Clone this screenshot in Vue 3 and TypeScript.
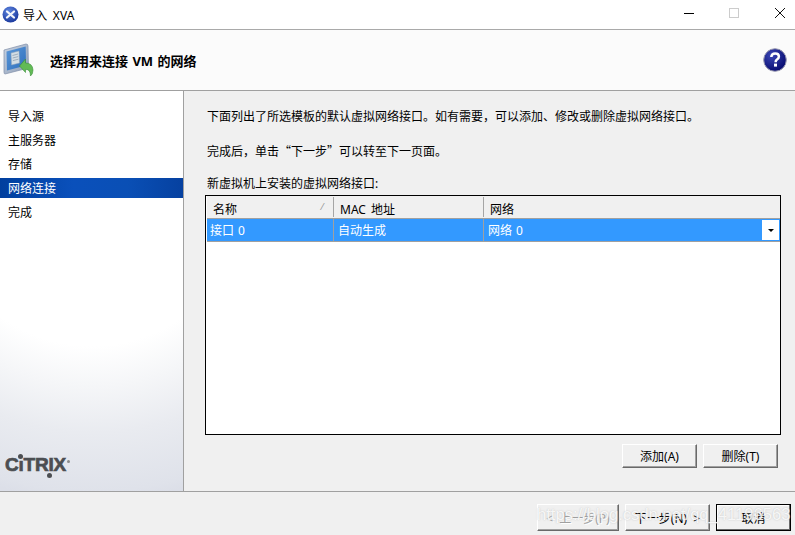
<script setup lang="ts">
interface Step { label: string; active?: boolean }
const steps: Step[] = [
  { label: '导入源' },
  { label: '主服务器' },
  { label: '存储' },
  { label: '网络连接', active: true },
  { label: '完成' },
]
</script>

<template>
  <div class="win">
    <div class="titlebar">
      <svg class="appicon" width="17" height="17" viewBox="0 0 17 17">
        <defs>
          <radialGradient id="ab" cx="40%" cy="30%" r="75%">
            <stop offset="0" stop-color="#5f86e0" />
            <stop offset="1" stop-color="#17359a" />
          </radialGradient>
        </defs>
        <circle cx="8.5" cy="8.5" r="8" fill="url(#ab)" />
        <path d="M5 5.5 L12 11.5 M12 5.5 L5 11.5" stroke="#f2f5fb" stroke-width="2.3" stroke-linecap="round" />
      </svg>
      <span class="title">导入 XVA</span>
      <div class="controls">
        <svg width="145" height="29" viewBox="0 0 145 29">
          <path d="M34 13.5 H44" stroke="#000" fill="none" />
          <rect x="79.5" y="8.5" width="9" height="9" fill="none" stroke="#ccc" />
          <path d="M125 8 L135 18 M135 8 L125 18" stroke="#111" fill="none" />
        </svg>
      </div>
    </div>

    <div class="header">
      <svg class="wizicon" width="34" height="36" viewBox="0 0 34 36">
        <defs>
          <linearGradient id="mon" x1="0" y1="0" x2="1" y2="1">
            <stop offset="0" stop-color="#c9d4e3" />
            <stop offset="1" stop-color="#8c9cb5" />
          </linearGradient>
          <linearGradient id="scr" x1="0" y1="0" x2="1" y2="1">
            <stop offset="0" stop-color="#5a97d8" />
            <stop offset="1" stop-color="#2f6fbd" />
          </linearGradient>
        </defs>
        <path d="M1 7 L23 1 Q25 1 25 3 L25.5 25 L2 31 Q1 31 1 29 Z" fill="url(#mon)" stroke="#7f8ea8" stroke-width=".7" />
        <path d="M3.5 8.5 L22.7 3.6 L23 22.5 L4 27.5 Z" fill="url(#scr)" />
        <path d="M8 10 L16 8 L16.5 20 L8.5 22 Z" fill="#d3dde4" stroke="#8da3b8" stroke-width=".5" />
        <path d="M9.5 12.5 L15 11 M9.7 15 L15.2 13.6 M9.9 17.6 L15.4 16.2" stroke="#8598aa" stroke-width=".7" />
        <path d="M16.5 23 L22.5 16 L22.5 20 Q29.5 20 30 27 Q30 31 27.5 33 Q27.5 26 22.5 26.5 L22.5 29.5 Z" fill="#62bb55" stroke="#3b8f3a" stroke-width=".6" />
      </svg>
      <span class="heading">选择用来连接 VM 的网络</span>
      <svg class="help" width="24" height="24" viewBox="0 0 24 24">
        <defs>
          <radialGradient id="hb" cx="35%" cy="30%" r="75%">
            <stop offset="0" stop-color="#3b47b5" />
            <stop offset="1" stop-color="#06096e" />
          </radialGradient>
        </defs>
        <circle cx="12" cy="12" r="11.3" fill="url(#hb)" stroke="#9a9ab0" stroke-width="1" />
        <path d="M8.3 9 Q8.5 5.5 12.2 5.5 Q15.9 5.5 15.9 8.6 Q15.9 10.4 14 11.5 Q12.6 12.4 12.6 14.2" fill="none" stroke="#fff" stroke-width="2.5" />
        <rect x="11" y="15.6" width="3" height="3" fill="#fff" />
      </svg>
    </div>

    <div class="main">
      <aside class="sidebar">
        <ul class="steps">
          <li v-for="s in steps" :key="s.label" class="step" :class="{ active: s.active }">{{ s.label }}</li>
        </ul>
        <div class="logo">
          <span class="logotext">CıTRIX</span>
          <i class="dot dot1"></i>
          <i class="dot dot2"></i>
          <i class="reg"></i>
        </div>
      </aside>

      <section class="content">
        <p class="para first">下面列出了所选模板的默认虚拟网络接口。如有需要，可以添加、修改或删除虚拟网络接口。</p>
        <p class="para second">完成后，单击“下一步”可以转至下一页面。</p>
        <p class="para third">新虚拟机上安装的虚拟网络接口:</p>

        <div class="table">
          <div class="thead">
            <div class="th c1">名称<span class="sort">⁄</span></div>
            <div class="th c2">MAC 地址</div>
            <div class="th c3">网络</div>
          </div>
          <div class="row">
            <div class="td c1">接口 0</div>
            <div class="td c2">自动生成</div>
            <div class="td c3">网络 0
              <span class="combo"><i class="arrow"></i></span>
            </div>
          </div>
        </div>

        <div class="actions">
          <button class="btn small" type="button">添加(A)</button>
          <button class="btn small" type="button">删除(T)</button>
        </div>
      </section>
    </div>

    <div class="footer">
      <button class="btn big back disabled" type="button">&lt; 上一步(P)</button>
      <button class="btn big next" type="button">下一步(N) &gt;</button>
      <button class="btn big default" type="button">取消</button>
      <span class="watermark">https://blog.csdn.net/qq_41196563</span>
    </div>
  </div>
</template>

<style>
html, body { margin: 0; padding: 0; background: #f0f0f0; }
</style>

<style scoped>
.win {
  width: 795px;
  height: 535px;
  overflow: hidden;
  display: flex;
  flex-direction: column;
  background: #f0f0f0;
  color: #000;
  font-family: "Noto Sans", "Noto Sans CJK SC", sans-serif;
  font-size: 12px;
  word-spacing: 1px;
}
.titlebar {
  height: 29px;
  flex: none;
  background: #fff;
  display: flex;
  align-items: center;
  position: relative;
}
.appicon { margin-left: 2px; }
.title { margin-left: 4px; font-size: 12px; word-spacing: 2px; letter-spacing: .2px; }
.controls { position: absolute; right: 0; top: 0; height: 29px; }
.controls svg { display: block; }
.header {
  height: 60px;
  flex: none;
  border-top: 1px solid #a9a9a9;
  border-bottom: 1px solid #a0a0a0;
  background: #fbfbfb;
  display: flex;
  align-items: center;
}
.wizicon { margin-left: 3px; margin-top: 2px; }
.heading { margin-left: 13px; font-weight: 700; font-size: 13px; }
.help { margin-left: auto; margin-right: 8px; }
.main { flex: 1; display: flex; min-height: 0; }
.sidebar {
  width: 184px;
  box-sizing: border-box;
  flex: none;
  border-right: 1px solid #a0a0a0;
  background: radial-gradient(circle 310px at 92px 100px, #fff 50%, #f5f6f8 63%, #e9ebf0 78%, #dfe2ea 97%, #dcdfe8 100%);
  display: flex;
  flex-direction: column;
  position: relative;
}
.steps { list-style: none; margin: 15px 0 0; padding: 0; }
.step { height: 20px; line-height: 22px; padding-left: 8px; margin-bottom: 4px; }
.step.active {
  color: #fff;
  background: linear-gradient(90deg, #003f9e 0%, #0a50bb 40%, #0a4fb5 70%, #0641a0 100%);
}
.logo { position: absolute; left: 5px; top: 363px; width: 66px; height: 24px; }
.logotext {
  font-family: "Liberation Sans", sans-serif;
  font-weight: 700;
  font-size: 19px;
  letter-spacing: -0.2px;
  color: #4c4e52;
  line-height: 22px;
  -webkit-text-stroke: .7px #4c4e52;
}
.dot { position: absolute; width: 5px; height: 5px; border-radius: 50%; background: #4c4e52; }
.dot1 { left: 13px; top: 0; }
.dot2 { left: 42px; top: 19px; }
.reg { position: absolute; left: 62px; top: 6px; width: 3px; height: 3px; border-radius: 50%; background: #8a8a8a; }
.content { flex: 1; display: flex; flex-direction: column; padding-left: 21px; min-width: 0; }
.para { margin: 0 0 0 2px; line-height: 18px; }
.first { margin-top: 17px; }
.second { margin-top: 16px; font-family: "Noto Sans CJK SC", sans-serif; }
.third { margin-top: 15px; }
.table {
  margin-top: 2px;
  height: 240px;
  flex: none;
  box-sizing: border-box;
  border: 1px solid #000;
  background: #fff;
  width: 576px;
  padding-left: 1px;
}
.thead {
  height: 22px;
  box-sizing: border-box;
  display: flex;
  background: #f0f0f0;
  padding-top: 1px;
}
.th { box-sizing: border-box; line-height: 25px; padding-left: 6px; position: relative; height: 20px; }
.th.c2 { word-spacing: 2px; }
.c1 { width: 127px; flex: none; }
.c2 { width: 150px; flex: none; }
.c3 { flex: 1; }
.th.c1, .th.c2 { border-right: 1px solid #a5a5a5; }
.sort { position: absolute; right: 10px; top: 0; font-size: 9px; line-height: 20px; color: #888; }
.row {
  height: 24px;
  display: flex;
  background: #3399ff;
  color: #fff;
  border-top: 1px solid #a0a0a0;
  border-bottom: 1px solid #a0a0a0;
  box-sizing: border-box;
}
.td { box-sizing: border-box; line-height: 24px; padding-left: 3px; position: relative; }
.td.c2, .td.c3 { padding-left: 4px; }
.td.c1, .td.c2 { border-right: 1px solid #a0a0a0; }
.combo {
  position: absolute;
  right: 1px;
  top: 1px;
  width: 17px;
  height: 20px;
  background: #fff;
  display: flex;
  align-items: center;
  justify-content: center;
}
.arrow {
  width: 0;
  height: 0;
  border-left: 3px solid transparent;
  border-right: 3px solid transparent;
  border-top: 3px solid #000;
}
.actions { display: flex; justify-content: flex-end; gap: 6px; margin-top: 9px; padding-right: 17px; }
.btn {
  font: inherit;
  color: #000;
  box-sizing: border-box;
  background: #f0f0f0;
  border: 1px solid;
  border-color: #fff #696969 #696969 #fff;
  box-shadow: inset -1px -1px 0 #a0a0a0, inset 1px 1px 0 #f0f0f0;
  padding: 0;
  word-spacing: 3px;
}
.small { width: 75px; height: 24px; }
.footer {
  height: 44px;
  flex: none;
  box-sizing: border-box;
  border-top: 1px solid #a0a0a0;
  display: flex;
  justify-content: flex-end;
  align-items: flex-start;
  gap: 6px;
  padding: 12px 4px 0 0;
  position: relative;
}
.big { height: 27px; }
.back { width: 82px; }
.next { width: 85px; }
.big.disabled { color: #a0a0a0; text-shadow: 1px 1px 0 #fff; }
.big.default { width: 75px; border: 1px solid #000; box-shadow: inset -1px -1px 0 #696969, inset 1px 1px 0 #fff; }
.watermark {
  position: absolute;
  left: 537px;
  top: 13px;
  font-family: "Liberation Sans", sans-serif;
  font-size: 16.6px;
  word-spacing: 0;
  color: rgba(255,255,255,.85);
  text-shadow: 0 0 1.5px rgba(170,170,170,.7);
  pointer-events: none;
  white-space: nowrap;
}
</style>
